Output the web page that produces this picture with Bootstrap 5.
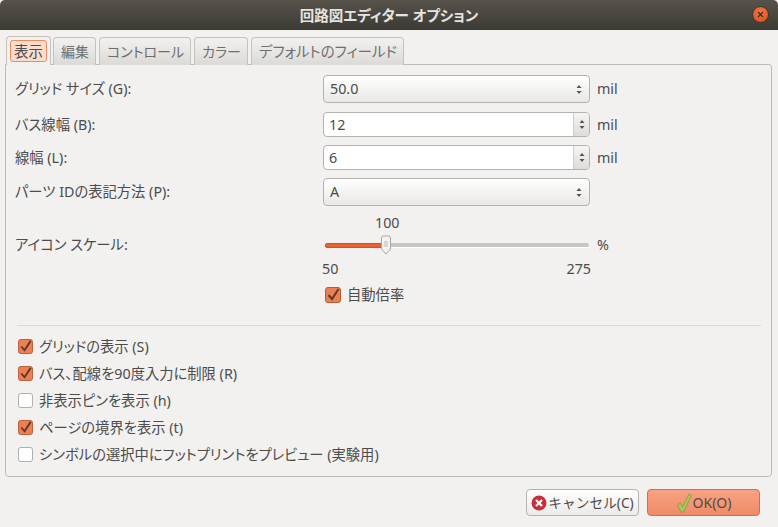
<!DOCTYPE html>
<html lang="ja">
<head>
<meta charset="utf-8">
<title>回路図エディター オプション</title>
<link href="https://cdn.jsdelivr.net/npm/bootstrap@5.3.0/dist/css/bootstrap.min.css" rel="stylesheet">
<style>
html,body{height:100%;}
body{margin:0;width:778px;height:527px;overflow:hidden;background:#f2f1f0;color:#4c4c4c;font-family:"Noto Sans","Noto Sans CJK JP",sans-serif;font-size:14.3px;line-height:18px;font-feature-settings:"palt";}
.dlg-title{height:30px;background:linear-gradient(#57534b,#3c3a34);color:#e6e4e0;font-weight:700;font-size:14.5px;border-radius:5px 5px 0 0;}
.dlg-close{right:9px;top:6px;width:17px;height:17px;border-radius:50%;background:radial-gradient(circle at 50% 35%,#f47a45,#d9481c);border:1px solid #3a3732;}
.dlg-body{padding:6px 5px 0 5px;}
.tabs-x{gap:3px;padding-left:1px;border:0;height:29px;margin-bottom:-1px;position:relative;z-index:1;}
.tab-x{height:28px;margin-top:1px;padding:0 6px 0 7px;border:1px solid #c4c2bd;border-bottom:0;border-radius:4px 4px 0 0;background:linear-gradient(#f2f1f0,#dcdad6);color:#6f6f6f;font-size:14px;line-height:27px;}
.tab-long{font-size:14.5px;}
.tab-on{height:29px;margin-top:0;margin-right:-1px;width:45px;padding:3px 3px 0;background:#f2f1f0;color:#4c4c4c;}
.tab-on span{display:block;height:22px;line-height:20px;text-align:center;font-size:14.5px;background:#fbdccd;border:1px solid #ef8a5f;border-radius:3px;}
.panel-x{height:413px;width:767px;border:1px solid #bdbbb7;border-radius:0 3px 4px 4px;padding:10px 9px 0 9px;}
.lbl-x{width:308px;}
.ctl-x{width:267px;}
.cmb-x{height:28px;border:1px solid #b5b3ae;border-radius:4px;background:linear-gradient(#fff,#e9e8e5);padding:0 6px;color:#4c4c4c;}
.spn-x{height:25px;border:1px solid #b5b3ae;border-radius:4px;background:#fff;overflow:hidden;}
.spn-v{padding:0 5px;}
.spn-b{width:16px;border-left:1px solid #ccc;background:linear-gradient(#f6f5f4,#dedcd8);}
.unit-x{margin-left:7px;}
.gap-9{margin-top:9px;}
.val-top{padding-left:52px;}
.slider-x{width:267px;height:18px;padding:0 1px 0 2px;}
.tr-on{width:60px;height:5px;background:#e9622f;border:1px solid #c9572a;border-radius:2px 0 0 2px;}
.tr-off{flex:1;height:4px;background:#c8c6c2;border-radius:0 2px 2px 0;box-shadow:0 1px 0 #fff;}
.thumb-x{left:57px;top:-1px;}
.scale-x{width:269px;margin-left:-1px;margin-top:6px;}
.auto-x{gap:6px;padding-left:2px;}
.chk-x{width:15px;height:15px;flex:none;}
.chk-big{width:16px;height:16px;}
.sep-x{height:1px;background:#dcdad6;margin:21px 1px 0 2px;}
.opts-x{margin-top:7px;}
.btn-x{width:113px;height:27px;padding:0;border:1px solid #b5b3ae;border-radius:4px;background:linear-gradient(#fff,#ecebe9);color:#4c4c4c;font-size:13.7px;line-height:25px;gap:1px;}
.btn-ok{background:linear-gradient(#f9a283,#f08a66);border-color:#cf6f4d;font-size:14px;}
.foot-x{padding:12px 13px 0 0;gap:8px;}
.opt-x{height:27px;padding-left:3px;gap:6px;}
</style>
</head>
<body>
<div class="dlg-title position-relative d-flex align-items-center justify-content-center">回路図エディター オプション
  <div class="dlg-close position-absolute d-flex align-items-center justify-content-center">
    <svg width="7" height="7" viewBox="0 0 7 7"><path d="M1 1l5 5M6 1l-5 5" stroke="#3a2a20" stroke-width="1.3"/></svg>
  </div>
</div>
<div class="dlg-body">
  <div class="tabs-x d-flex">
    <div class="tab-x tab-on"><span>表示</span></div>
    <div class="tab-x">編集</div>
    <div class="tab-x">コントロール</div>
    <div class="tab-x">カラー</div>
    <div class="tab-x tab-long">デフォルトのフィールド</div>
  </div>
  <div class="panel-x">
    <div class="d-flex align-items-center"><div class="lbl-x">グリッド サイズ (G):</div>
      <div class="ctl-x cmb-x d-flex align-items-center justify-content-between"><span>50.0</span>
        <svg width="8" height="13" viewBox="0 0 8 13"><path d="M4 2l2.500 3h-5zM4 11L1.500 8h5z" fill="#555"/></svg></div>
      <div class="unit-x">mil</div></div>
    <div class="d-flex align-items-center gap-9"><div class="lbl-x">バス線幅 (B):</div>
      <div class="ctl-x spn-x d-flex"><div class="spn-v flex-grow-1 d-flex align-items-center">12</div>
        <div class="spn-b d-flex align-items-center justify-content-center"><svg width="8" height="13" viewBox="0 0 8 13"><path d="M4 2l2.500 3h-5zM4 11L1.500 8h5z" fill="#555"/></svg></div></div>
      <div class="unit-x">mil</div></div>
    <div class="d-flex align-items-center mt-2"><div class="lbl-x">線幅 (L):</div>
      <div class="ctl-x spn-x d-flex"><div class="spn-v flex-grow-1 d-flex align-items-center">6</div>
        <div class="spn-b d-flex align-items-center justify-content-center"><svg width="8" height="13" viewBox="0 0 8 13"><path d="M4 2l2.500 3h-5zM4 11L1.500 8h5z" fill="#555"/></svg></div></div>
      <div class="unit-x">mil</div></div>
    <div class="d-flex align-items-center mt-2"><div class="lbl-x">パーツ IDの表記方法 (P):</div>
      <div class="ctl-x cmb-x d-flex align-items-center justify-content-between"><span>A</span>
        <svg width="8" height="13" viewBox="0 0 8 13"><path d="M4 2l2.500 3h-5zM4 11L1.500 8h5z" fill="#555"/></svg></div></div>
    <div class="d-flex mt-2">
      <div class="lbl-x"></div>
      <div class="ctl-x val-top">100</div>
    </div>
    <div class="d-flex align-items-center mt-1"><div class="lbl-x">アイコン スケール:</div>
      <div class="slider-x position-relative d-flex align-items-center">
        <div class="tr-on"></div><div class="tr-off"></div>
        <svg class="thumb-x position-absolute" width="12" height="20" viewBox="0 0 12 20"><path d="M1.500 3a2 2 0 0 1 2-2h5a2 2 0 0 1 2 2v11l-4.500 5-4.500-5z" fill="#f4f3f1" stroke="#a9a7a2"/><path d="M4 7h4M4 9h4M4 11h4" stroke="#bbb"/></svg>
      </div>
      <div class="unit-x">%</div></div>
    <div class="d-flex"><div class="lbl-x"></div>
      <div class="scale-x d-flex justify-content-between"><span>50</span><span>275</span></div></div>
    <div class="d-flex mt-2"><div class="lbl-x"></div>
      <div class="auto-x d-flex align-items-center">
        <svg class="chk-x chk-big" viewBox="0 0 16 16"><rect x=".5" y=".5" width="15" height="15" rx="2.500" fill="#ee7f54" stroke="#b85a34"/><path d="M3.500 8l3.500 4 6.500-10" fill="none" stroke="#5a3a2c" stroke-width="2"/></svg>
        <span>自動倍率</span></div></div>
    <div class="sep-x"></div>
    <div class="opts-x">
      <div class="opt-x d-flex align-items-center"><svg class="chk-x" viewBox="0 0 16 16"><rect x=".5" y=".5" width="15" height="15" rx="2.500" fill="#ee7f54" stroke="#b85a34"/><path d="M3.500 8l3.500 4 6.500-10" fill="none" stroke="#5a3a2c" stroke-width="2"/></svg><span>グリッドの表示 (S)</span></div>
      <div class="opt-x d-flex align-items-center"><svg class="chk-x" viewBox="0 0 16 16"><rect x=".5" y=".5" width="15" height="15" rx="2.500" fill="#ee7f54" stroke="#b85a34"/><path d="M3.500 8l3.500 4 6.500-10" fill="none" stroke="#5a3a2c" stroke-width="2"/></svg><span>バス、配線を90度入力に制限 (R)</span></div>
      <div class="opt-x d-flex align-items-center"><svg class="chk-x" viewBox="0 0 16 16"><rect x=".5" y=".5" width="15" height="15" rx="2.500" fill="#fff" stroke="#a9a7a2"/></svg><span>非表示ピンを表示 (h)</span></div>
      <div class="opt-x d-flex align-items-center"><svg class="chk-x" viewBox="0 0 16 16"><rect x=".5" y=".5" width="15" height="15" rx="2.500" fill="#ee7f54" stroke="#b85a34"/><path d="M3.500 8l3.500 4 6.500-10" fill="none" stroke="#5a3a2c" stroke-width="2"/></svg><span>ページの境界を表示 (t)</span></div>
      <div class="opt-x d-flex align-items-center"><svg class="chk-x" viewBox="0 0 16 16"><rect x=".5" y=".5" width="15" height="15" rx="2.500" fill="#fff" stroke="#a9a7a2"/></svg><span>シンボルの選択中にフットプリントをプレビュー (実験用)</span></div>
    </div>
  </div>
  <div class="foot-x d-flex justify-content-end">
    <button class="btn btn-x d-flex align-items-center justify-content-center" type="button">
      <svg width="16" height="16" viewBox="0 0 16 16"><circle cx="8" cy="8" r="7.500" fill="#c7303a"/><path d="M5 5l6 6M11 5l-6 6" stroke="#fff" stroke-width="2.200"/></svg><span>キャンセル(C)</span></button>
    <button class="btn btn-x btn-ok d-flex align-items-center justify-content-center" type="button">
      <svg width="16" height="20" viewBox="0 0 16 20"><path d="M1.500 12l3-2 2 4L13 1l2.500 1.500-8 16.500H5z" fill="#a7c957" stroke="#7d9c3a" stroke-width=".8"/></svg><span>OK(O)</span></button>
  </div>
</div>
<script src="https://cdn.jsdelivr.net/npm/bootstrap@5.3.0/dist/js/bootstrap.bundle.min.js"></script>
</body>
</html>
